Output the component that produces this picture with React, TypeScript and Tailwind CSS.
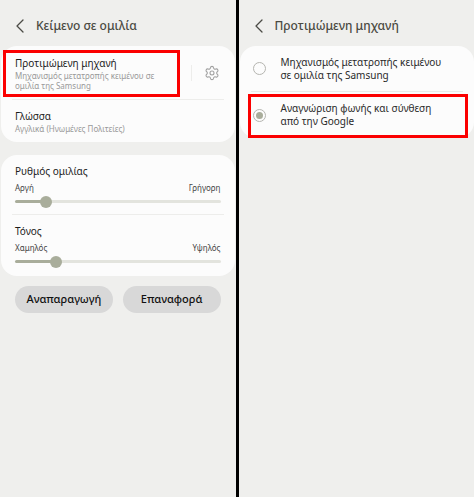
import { useState } from 'react'
import { ChevronLeft, Settings } from 'lucide-react'

const ENGINES = [
  { id: 'samsung', label: 'Μηχανισμός μετατροπής κειμένου σε ομιλία της Samsung' },
  { id: 'google', label: 'Αναγνώριση φωνής και σύνθεση από την Google' },
]

function Header({ title }: { title: string }) {
  return (
    <header className="flex h-[46px] items-center gap-1 pt-[6px] pl-2">
      <button type="button" aria-label="Πίσω" className="text-[#4b4b45]">
        <ChevronLeft size={24} strokeWidth={1.3} />
      </button>
      <h1 className="whitespace-nowrap text-[12px] leading-5 font-medium text-[#4a4a42]">{title}</h1>
    </header>
  )
}

function SliderRow({ id, title, min, max, initial }: { id: string; title: string; min: string; max: string; initial: number }) {
  const [value, setValue] = useState(initial)

  return (
    <div className="px-[3px] pt-2 pb-[6px]">
      <label htmlFor={id} className="block text-[10px] leading-4 text-[#1c1c1c]">
        {title}
      </label>
      <div className="mt-[2px] flex justify-between text-[8px] leading-[14px] text-[#444]">
        <span>{min}</span>
        <span>{max}</span>
      </div>
      <input
        id={id}
        type="range"
        min={0}
        max={100}
        value={value}
        onChange={(e) => setValue(Number(e.target.value))}
        style={{ backgroundImage: `linear-gradient(to right, #a9ad9b ${value}%, #e3e4de ${value}%)` }}
        className="my-[5px] block h-[3px] w-full appearance-none rounded-full [&::-webkit-slider-thumb]:size-3 [&::-webkit-slider-thumb]:appearance-none [&::-webkit-slider-thumb]:rounded-full [&::-webkit-slider-thumb]:bg-[#a9ad9b]"
      />
    </div>
  )
}

export default function App() {
  const [engine, setEngine] = useState('google')

  return (
    <div className="flex min-h-screen gap-[3px] bg-black font-['Noto_Sans',sans-serif]">
      {/* Text to speech settings */}
      <main className="min-w-0 flex-1 bg-[#efefed]">
        <Header title="Κείμενο σε ομιλία" />

        <section className="mx-px rounded-2xl bg-[#fcfcfc] px-[11px]">
          <div className="relative flex items-center border-b border-[#ededeb] pt-[9px] pb-2">
            <div className="flex-1 pl-[3px]">
              <h2 className="text-[10px] leading-4 text-[#1c1c1c]">Προτιμώμενη μηχανή</h2>
              <p className="w-[150px] text-[8px] leading-[10px] text-[#999]">
                Μηχανισμός μετατροπής κειμένου σε ομιλία της Samsung
              </p>
            </div>
            <button type="button" aria-label="Ρυθμίσεις μηχανής" className="border-l border-[#ededeb] pr-1 pl-3 text-[#a0a0a0]">
              <Settings size={16} strokeWidth={1.6} />
            </button>
            <div className="pointer-events-none absolute top-1 bottom-[2px] -left-[9px] w-[177px] border-3 border-[#fb0000]" />
          </div>
          <div className="pt-2 pb-2 pl-[3px]">
            <h2 className="text-[10px] leading-4 text-[#1c1c1c]">Γλώσσα</h2>
            <p className="text-[8px] leading-[10px] text-[#999]">Αγγλικά (Ηνωμένες Πολιτείες)</p>
          </div>
        </section>

        <section className="mx-px mt-[13px] divide-y divide-[#ededeb] rounded-2xl bg-[#fcfcfc] px-[11px] pb-[2px]">
          <SliderRow id="rate" title="Ρυθμός ομιλίας" min="Αργή" max="Γρήγορη" initial={13} />
          <SliderRow id="pitch" title="Τόνος" min="Χαμηλός" max="Υψηλός" initial={18} />
        </section>

        <div className="mt-[10px] flex gap-[10px] px-[15px]">
          <button type="button" className="h-[27px] flex-1 rounded-full bg-[#d8d8d8] text-[11px] font-medium text-[#111]">
            Αναπαραγωγή
          </button>
          <button type="button" className="h-[27px] flex-1 rounded-full bg-[#d8d8d8] text-[11px] font-medium text-[#111]">
            Επαναφορά
          </button>
        </div>
      </main>

      {/* Preferred engine picker */}
      <main className="min-w-0 flex-1 bg-[#efefed]">
        <Header title="Προτιμώμενη μηχανή" />

        <section className="ml-px divide-y divide-[#e8ebe9] rounded-2xl bg-[#fcfcfc] px-[11px]">
          {ENGINES.map((item) => (
            <label key={item.id} className="relative flex h-[46px] items-center gap-[15px] pl-[2px]">
              <input
                type="radio"
                name="engine"
                checked={engine === item.id}
                onChange={() => setEngine(item.id)}
                className="size-[13px] shrink-0 appearance-none rounded-full border border-[#b5b5b0] bg-[#fcfcfc] bg-clip-content p-[2px] checked:bg-[#a9ad9b]"
              />
              <span className="w-[168px] text-[10px] leading-[13px] text-[#2a2a2a]">{item.label}</span>
              {item.id === 'google' && (
                <div className="pointer-events-none absolute top-[2px] bottom-0 -right-[5px] -left-[3px] border-3 border-[#fb0000]" />
              )}
            </label>
          ))}
        </section>
      </main>
    </div>
  )
}
